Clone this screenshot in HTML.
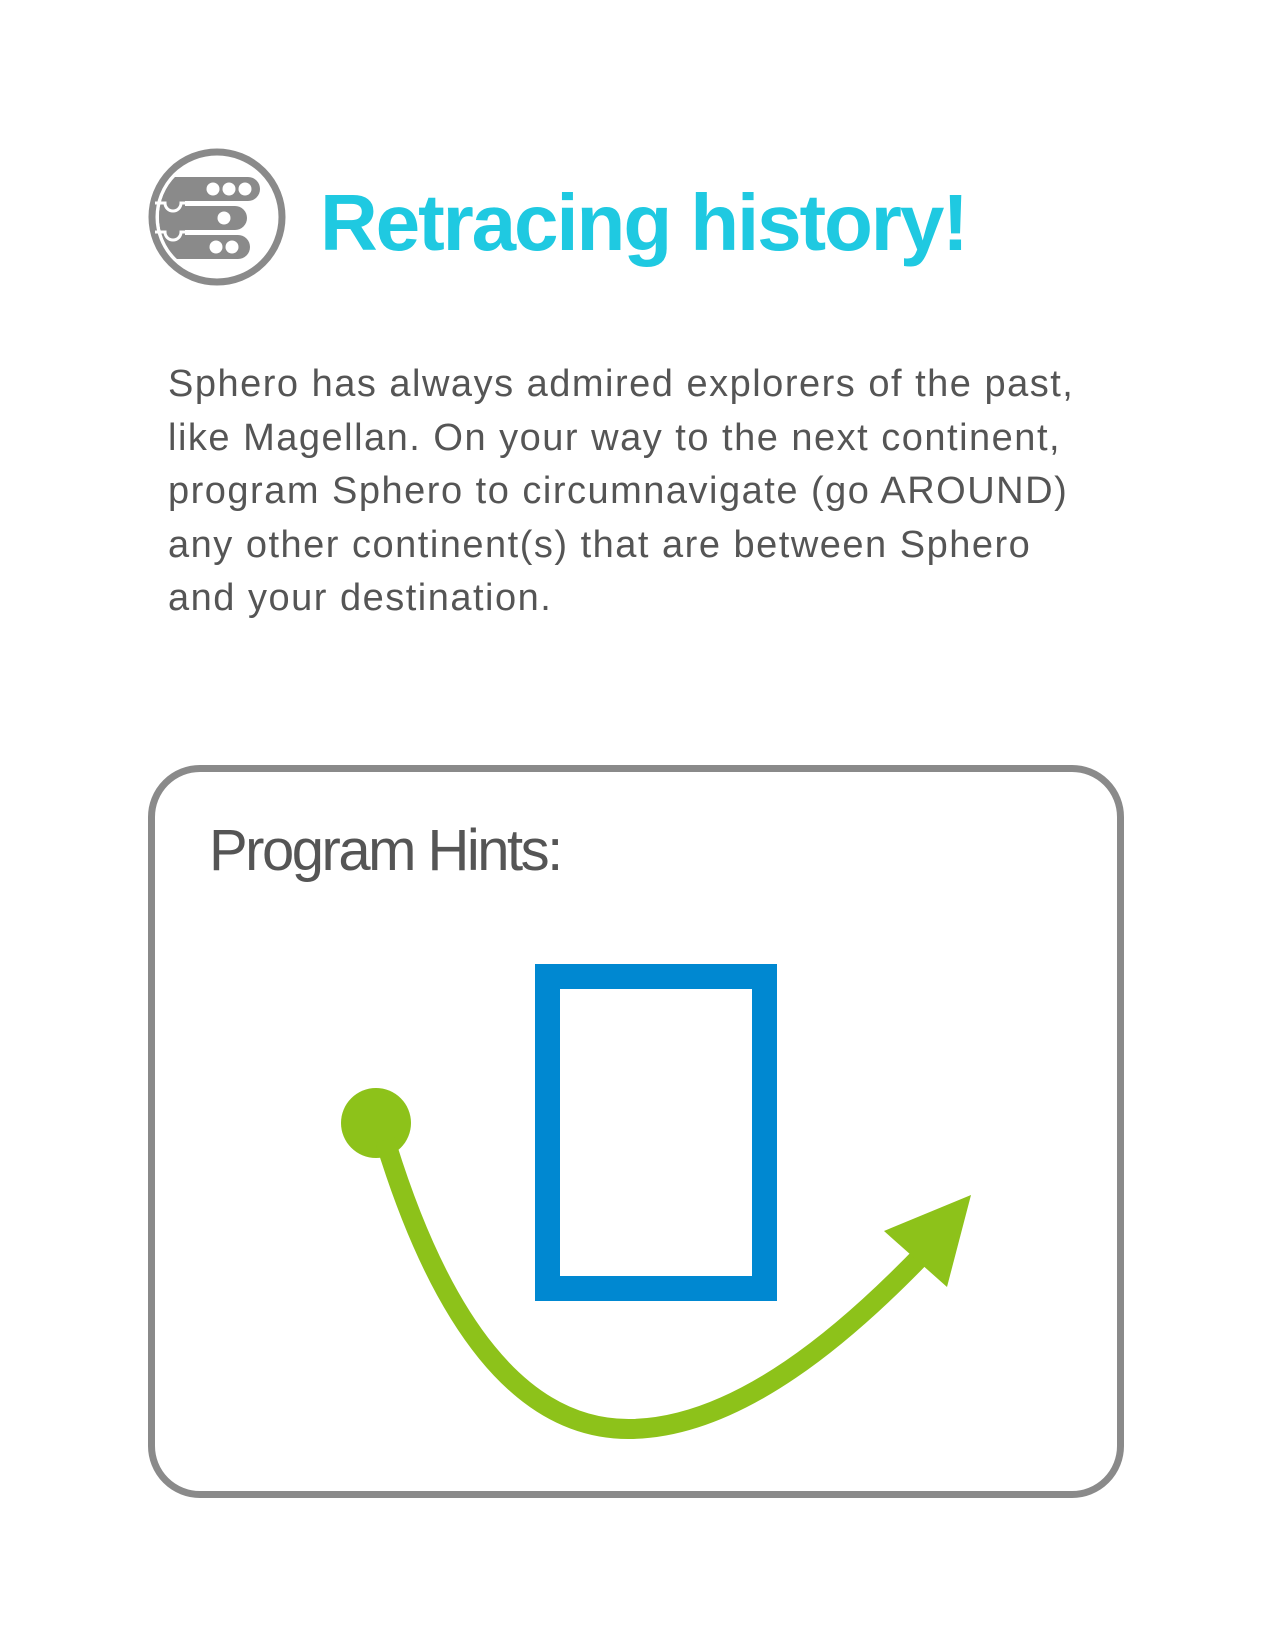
<!DOCTYPE html>
<html><head><meta charset="utf-8"><style>
html,body{margin:0;padding:0;background:#fff;}
body{width:1275px;height:1644px;position:relative;overflow:hidden;font-family:"Liberation Sans",sans-serif;}
.t{position:absolute;left:320px;top:177px;font-size:80px;font-weight:bold;color:#1fc9e1;line-height:92px;letter-spacing:-2.1px;white-space:nowrap;}
.b{position:absolute;left:168px;top:358px;font-size:38px;line-height:53.5px;color:#555;white-space:nowrap;letter-spacing:1.5px;}
.box{position:absolute;left:148px;top:765px;width:962px;height:719px;border:7px solid #8a8a8a;border-radius:52px;}
.h{position:absolute;left:209px;top:816px;font-size:58px;color:#555;letter-spacing:-2.5px;line-height:70px;white-space:nowrap;}
</style></head><body>
<svg style="position:absolute;left:0;top:0" width="1275" height="1644">
  <defs><clipPath id="c"><circle cx="217" cy="217" r="58"/></clipPath></defs>
  <circle cx="217" cy="217" r="65" fill="none" stroke="#8a8a8a" stroke-width="7"/>
  <g clip-path="url(#c)" fill="#8a8a8a">
    <rect x="150" y="177" width="110" height="24" rx="12"/>
    <rect x="150" y="206" width="97" height="24" rx="12"/>
    <rect x="150" y="235" width="100" height="24" rx="12"/>
    <rect x="150" y="177" width="35" height="82"/>
  </g>
  <g fill="#fff">
    <circle cx="213" cy="189" r="6.5"/><circle cx="229" cy="189" r="6.5"/><circle cx="245" cy="189" r="6.5"/>
    <circle cx="224" cy="218" r="6.5"/>
    <circle cx="216" cy="247" r="6.5"/><circle cx="232" cy="247" r="6.5"/>
  </g>
  <g fill="none" stroke="#fff" stroke-width="3">
    <path d="M155 203 H165 a8 8 0 0 0 16 0 H190"/>
    <path d="M155 232 H165 a8 8 0 0 0 16 0 H190"/>
  </g>
  <rect x="547.5" y="976.5" width="217" height="312" fill="none" stroke="#0088d1" stroke-width="25"/>
  <circle cx="376" cy="1123" r="35" fill="#8dc21a"/>
  <path d="M385 1140 C440 1320 520 1430 630 1429 C740 1428 850 1330 925 1252" fill="none" stroke="#8dc21a" stroke-width="20"/>
  <polygon points="884,1231 971,1195 947,1287" fill="#8dc21a"/>
</svg>
<div class="t">Retracing history!</div>
<div class="b">Sphero has always admired explorers of the past,<br>like Magellan. On your way to the next continent,<br>program Sphero to circumnavigate (go AROUND)<br>any other continent(s) that are between Sphero<br>and your destination.</div>
<div class="box"></div>
<div class="h">Program Hints:</div>
</body></html>
